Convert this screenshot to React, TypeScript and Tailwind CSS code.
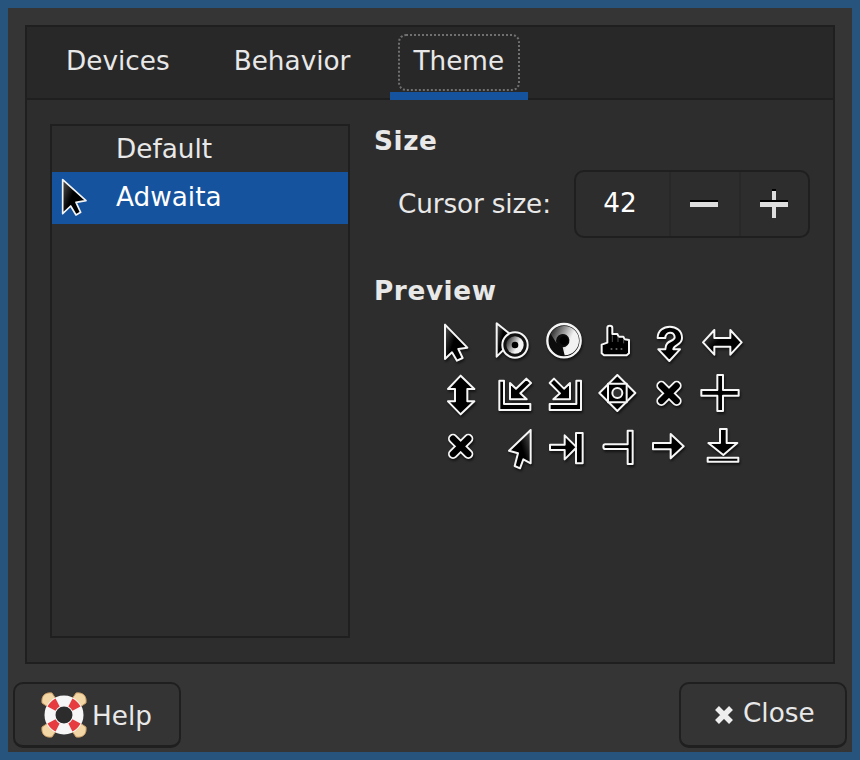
import { ReactNode } from 'react';

// shared look of the theme's cursors: black body, thin white outline, soft shadow
function Cur({ x, y, children }: { x: number; y: number; children: ReactNode }) {
  return (
    <svg
      width="52"
      height="52"
      viewBox={`${x} ${y} 156 156`}
      fill="#000"
      stroke="#f6f6f6"
      strokeWidth="6"
      strokeLinejoin="round"
      className="block overflow-visible blur-[0.3px] drop-shadow-[1px_2px_1px_rgba(0,0,0,0.55)]"
    >
      {children}
    </svg>
  );
}

const R0 = 9;
const R1 = 165;
const R2 = 321;
const LEFT = [12, 168, 324];
const RIGHT = [0, 156, 312];

function Cross({ cx, cy }: { cx: number; cy: number }) {
  const d = `M${cx - 23} ${cy - 23}L${cx + 23} ${cy + 23}M${cx + 23} ${cy - 23}L${cx - 23} ${cy + 23}`;
  return (
    <>
      <path d={d} strokeWidth="30" strokeLinecap="round" />
      <path d={d} stroke="#000" strokeWidth="19" strokeLinecap="round" />
    </>
  );
}

function PreviewGrid() {
  return (
    <div className="grid grid-cols-[repeat(6,52px)] grid-rows-[repeat(3,52px)] ml-[60px] mt-[13px]">
      <Cur x={LEFT[0]} y={R0}>
        <path d="M45 32V135L66 115L81 140L98 132L85 105L112 101Z" fill="url(#curGrad)" />
      </Cur>
      <Cur x={LEFT[1]} y={R0}>
        <path d="M200 28V128L232 96L240 60Z" fill="url(#curGrad)" />
        <circle cx="255" cy="93" r="38" fill="#111" />
        <circle cx="255" cy="93" r="26" fill="url(#spinGrad)" stroke="none" />
        <circle cx="255" cy="93" r="10" fill="#000" stroke="none" />
      </Cur>
      <Cur x={LEFT[2]} y={R0}>
        <circle cx="402" cy="80" r="50" fill="#0c0c0c" strokeWidth="7" />
        <path d="M402 36A44 44 0 0 1 404 124L398 100A20 20 0 1 0 380 88L362 60A44 44 0 0 1 402 36Z" fill="url(#spinGrad)" stroke="none" />
        <circle cx="402" cy="80" r="13" fill="#000" stroke="none" />
      </Cur>
      <Cur x={RIGHT[0]} y={R0}>
        <path d="M52 42C52 33 67 33 67 42V60L82 60L86 68L100 68L104 76L117 78V118L110 124H42L35 118V92L52 86Z" />
        <path d="M67 64V84M84 68V84M101 76V88" stroke="#555" strokeWidth="3" />
        <path d="M62 105h5M77 105h5M92 105h5" stroke="#bbb" strokeWidth="3" />
      </Cur>
      <Cur x={RIGHT[1]} y={R0}>
        <path d="M203 72C203 27 276 27 276 72C276 96 250 90 250 106H270L238 141L205 106H226C226 76 254 84 254 70C254 50 226 52 226 72Z" />
      </Cur>
      <Cur x={RIGHT[2]} y={R0}>
        <path d="M339 85L373 48V72H421V48L455 85L421 122V98H373V122Z" fill="url(#curGrad)" />
      </Cur>

      <Cur x={LEFT[0]} y={R1}>
        <path d="M92 185L133 225H112V262H133L92 301L54 262H75V225H54Z" />
      </Cur>
      <Cur x={LEFT[1]} y={R1}>
        <path d="M208 200H222V270H301V288H208Z" />
        <path d="M240 256V207L258 224L289 194L303 207L271 238L290 256Z" />
      </Cur>
      <Cur x={LEFT[2]} y={R1}>
        <path d="M439 200H453V288H359V270H439Z" />
        <path d="M420 256V207L402 224L372 194L359 207L390 238L370 256Z" />
      </Cur>
      <Cur x={RIGHT[0]} y={R1}>
        <path d="M82 183L136 237L82 291L28 237Z" />
        <rect x="54" y="209" width="56" height="56" />
        <circle cx="82" cy="237" r="15" fill="#333" />
      </Cur>
      <Cur x={RIGHT[1]} y={R1}>
        <Cross cx={237} cy={238} />
      </Cur>
      <Cur x={RIGHT[2]} y={R1}>
        <path d="M382 183H399V228H446V245H399V291H382V245H334V228H382Z" />
      </Cur>

      <Cur x={LEFT[0]} y={R2}>
        <Cross cx={92} cy={397} />
      </Cur>
      <Cur x={LEFT[1]} y={R2}>
        <path d="M302 348V448L280 436L270 463L254 456L264 418L237 410Z" fill="url(#curGrad2)" />
      </Cur>
      <Cur x={LEFT[2]} y={R2}>
        <path d="M360 392H404V364L438 398V357H458V448H438V402L404 436V408H360Z" />
      </Cur>
      <Cur x={RIGHT[0]} y={R2}>
        <path d="M113 350H128V450H113V405H46C38 405 38 391 46 391H113Z" />
      </Cur>
      <Cur x={RIGHT[1]} y={R2}>
        <path d="M189 387H242V360L281 397L242 433V406H189Z" />
      </Cur>
      <Cur x={RIGHT[2]} y={R2}>
        <path d="M390 345H410V387H442L400 423L355 387H390Z" />
        <rect x="353" y="431" width="92" height="12" />
      </Cur>
    </div>
  );
}

function LifeRing() {
  return (
    <svg width="46" height="46" viewBox="0 0 46 46" className="block blur-[0.5px]">
      <g fill="#f3d6a6" stroke="#c79a63" strokeWidth="1">
        <path d="M1 11C0 4 4 0 11 1L15 7L7 15Z" />
        <path d="M45 11C46 4 42 0 35 1L31 7L39 15Z" />
        <path d="M1 35C0 42 4 46 11 45L15 39L7 31Z" />
        <path d="M45 35C46 42 42 46 35 45L31 39L39 31Z" />
      </g>
      <circle cx="23" cy="23" r="14" fill="none" stroke="#f6f6f6" strokeWidth="11" />
      <g stroke="#e63b3f" strokeWidth="9" fill="none">
        <path d="M10.5 16.6A14 14 0 0 1 16.6 10.5" />
        <path d="M35.5 16.6A14 14 0 0 0 29.4 10.5" />
        <path d="M10.5 29.4A14 14 0 0 0 16.6 35.5" />
        <path d="M35.5 29.4A14 14 0 0 1 29.4 35.5" />
      </g>
      <circle cx="23" cy="23" r="8" fill="#2c2c2c" />
    </svg>
  );
}

export default function App() {
  return (
    <div
      className="w-[860px] h-[760px] p-2 bg-[#26547c] text-[#e8e8e8] text-[26.3px] leading-none"
      style={{ fontFamily: '"DejaVu Sans", sans-serif' }}
    >
      <svg width="0" height="0" className="absolute">
        <defs>
          <linearGradient id="curGrad" x1="0" y1="0" x2="1" y2="0.6">
            <stop offset="0" stopColor="#555555" />
            <stop offset="0.5" stopColor="#000" />
          </linearGradient>
          <linearGradient id="curGrad2" x1="1" y1="0" x2="0" y2="0.6">
            <stop offset="0" stopColor="#555555" />
            <stop offset="0.5" stopColor="#000" />
          </linearGradient>
          <linearGradient id="spinGrad" x1="0" y1="0" x2="1" y2="0.5">
            <stop offset="0" stopColor="#111" />
            <stop offset="0.75" stopColor="#f2f2f2" />
          </linearGradient>
        </defs>
      </svg>
      <div className="h-full flex flex-col bg-[#353535] pt-[17px] px-[5px]">
        <div className="mx-3 h-[639px] flex flex-col border-2 border-[#1f1f1f] bg-[#2d2d2d]">
          <div className="h-[71px] shrink-0 flex items-stretch gap-[16px] pl-[15px] bg-[#282828] border-b-2 border-[#1f1f1f] box-content -mb-px">
            <div className="flex items-center px-6 pb-[2px]">Devices</div>
            <div className="flex items-center px-6 pb-[2px]">Behavior</div>
            <div className="relative flex items-center px-6 pb-[2px] -ml-px">
              Theme
              <div className="absolute left-[9px] right-2 top-[7px] h-[57px] border-2 border-dotted border-[#707070] rounded-lg" />
              <div className="absolute left-px right-0 -bottom-[2px] h-2 bg-[#15539e]" />
            </div>
          </div>
          <div className="flex-1 flex pt-[25px] pl-[23px] pb-[24px]">
            <div className="w-[300px] border-2 border-[#1f1f1f] bg-[#2d2d2d]">
              <div className="h-[46px] pl-[64px] flex items-center">Default</div>
              <div className="h-[52px] pl-[64px] flex items-center relative bg-[#15539e] text-white pb-[2px]">
                Adwaita
                <svg
                  width="30"
                  height="42"
                  viewBox="0 0 90 126"
                  fill="url(#curGrad)"
                  stroke="#f4f4f4"
                  strokeWidth="5"
                  strokeLinejoin="round"
                  className="absolute left-[8px] top-[5px] blur-[0.3px]"
                >
                  <path d="M8 8V110L32 87L48 114L62 106L48 76L78 71Z" />
                </svg>
              </div>
            </div>
            <div className="flex-1 pl-[24px]">
              <div className="font-bold h-[30px] pt-[4px] tracking-[0.6px]">Size</div>
              <div className="flex items-center mt-[16px] ml-[24px]">
                <span className="w-[176px] tracking-[-0.15px]">Cursor size:</span>
                <div className="w-[236px] h-[68px] flex border-2 border-[#1f1f1f] rounded-[10px] bg-[#2d2d2d]">
                  <div className="w-[93px] flex items-center justify-center pr-[5px] pb-[2px] text-white">42</div>
                  <div className="w-[70px] flex items-center justify-center border-l-2 border-[#282828]">
                    <svg width="30" height="30" viewBox="0 0 30 30" className="block">
                      <rect x="0" y="11" width="28" height="2" fill="#000" />
                      <rect x="0" y="13" width="28" height="5" fill="#dddddd" />
                    </svg>
                  </div>
                  <div className="flex-1 flex items-center justify-center border-l-2 border-[#282828]">
                    <svg width="30" height="30" viewBox="0 0 30 30" className="block">
                      <rect x="12" y="0" width="4" height="29" fill="#dddddd" />
                      <rect x="12" y="0" width="4" height="2" fill="#000" />
                      <rect x="0" y="11" width="28" height="2" fill="#000" />
                      <rect x="0" y="13" width="28" height="5" fill="#dddddd" />
                    </svg>
                  </div>
                </div>
              </div>
              <div className="font-bold mt-[40px] tracking-[0.6px]">Preview</div>
              <PreviewGrid />
            </div>
          </div>
        </div>
        <div className="flex-1 flex justify-between items-start pt-[18px]">
          <div className="w-[168px] h-[66px] flex items-center pl-[26px] gap-[5px] border-2 border-[#1f1f1f] border-b-[3px] rounded-[10px] bg-[#343434]">
            <LifeRing />
            <span className="pt-[3px]">Help</span>
          </div>
          <div className="w-[168px] h-[66px] flex items-center pl-[33px] gap-[9px] border-2 border-[#1f1f1f] border-b-[3px] rounded-[10px] bg-[#343434]">
            <svg width="20" height="20" viewBox="0 0 20 20" className="block" stroke="#eeeeee" strokeWidth="5.5">
              <path d="M3 3L17 17M17 3L3 17" />
            </svg>
            <span className="pb-[3px]">Close</span>
          </div>
        </div>
      </div>
    </div>
  );
}
